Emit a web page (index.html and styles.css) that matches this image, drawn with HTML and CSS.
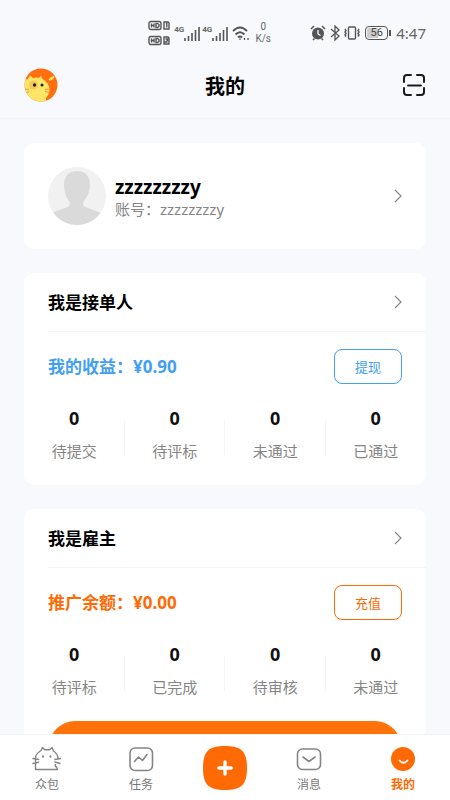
FILE: index.html
```html
<!DOCTYPE html>
<html lang="zh-CN">
<head>
<meta charset="utf-8">
<meta name="viewport" content="width=device-width, initial-scale=1">
<title>我的</title>
<link rel="stylesheet" href="styles.css">
</head>
<body>
<div class="status">
  <svg class="sim" width="24" height="26" viewBox="0 0 24 26" fill="none" stroke="#555" stroke-width="1.400">
    <rect x="1" y="1.500" width="12" height="8" rx="2"/><path d="M3.500 3.500v4M6 3.500v4M3.500 5.500H6M8 3.500v4h1.500l1.500-1v-2l-1.500-1z"/>
    <path d="M16 2h4l1 1v6h-5z M18 4l.8-.5v4"/>
    <rect x="1" y="16.500" width="12" height="8" rx="2"/><path d="M3.500 18.500v4M6 18.500v4M3.500 20.500H6M8 18.500v4h1.500l1.500-1v-2l-1.500-1z"/>
    <path d="M16 17h4l1 1v6h-5z M17.500 19h2v1.500l-2 1.500h2"/>
  </svg>
  <span class="cell"><small>4G</small><svg width="16" height="15" viewBox="0 0 16 15" stroke="#555" stroke-width="1.600"><path d="M1 12v3M4.500 10v5M8 7v8M11.500 4v11M15 1v14"/></svg></span>
  <span class="cell"><small>4G</small><svg width="16" height="15" viewBox="0 0 16 15" stroke="#555" stroke-width="1.600"><path d="M1 12v3M4.500 10v5M8 7v8M11.500 4v11M15 1v14"/></svg></span>
  <svg class="wifi" width="18" height="15" viewBox="0 0 18 15" fill="none" stroke="#555" stroke-width="1.900"><path d="M1 5q7-7 14 0M3.500 8.500q4.500-4.500 9 0M6 11.500q2-2 4 0"/><path d="M8 12.500v1.500M12.500 12v2M16 12v2" stroke-width="1.300"/></svg>
  <span class="speed">0<br>K/s</span>
  <svg class="alarm" width="16" height="16" viewBox="0 0 16 16"><circle cx="8" cy="8.500" r="6" fill="#555"/><path d="M1 4l3-3M15 4l-3-3M3 15l1.500-1.500M13 15l-1.500-1.500" stroke="#555" stroke-width="1.500"/><path d="M8 5v4l2.500 1.500" fill="none" stroke="#fff" stroke-width="1.300"/></svg>
  <svg class="bt" width="12" height="16" viewBox="0 0 12 16" fill="none" stroke="#555" stroke-width="1.300"><path d="M2 4l8 7-4 4V1l4 4-8 7"/></svg>
  <svg class="vib" width="18" height="16" viewBox="0 0 18 16" fill="none" stroke="#555" stroke-width="1.400"><rect x="5.500" y="2" width="7" height="12" rx="1"/><path d="M2 4l1 1.500-1 1.500 1 1.500-1 1.500 1 1.500M16 4l-1 1.500 1 1.500-1 1.500 1 1.500-1 1.500"/></svg>
  <span class="battery">56</span>
  <span class="clock">4:47</span>
</div>

<header class="top">
  <a href="#" aria-label="主页">
    <svg width="34" height="34" viewBox="0 0 34 34">
      <defs><clipPath id="round"><circle cx="17" cy="17" r="16.500"/></clipPath></defs>
      <g clip-path="url(#round)">
        <rect width="34" height="34" fill="#ff6f0f"/>
        <path d="M0 13q1-1 4-2.500l2-3 3 2.500q4-.8 6 0l2-2.500 1.500 3.500q6 3 7 10 0 5-3.500 9L22 34H0z" fill="#fee568"/>
        <path d="M25 12q1-3 5-3.500-1 4-5 3.500z" fill="#fee568" stroke="#fee568"/>
        <circle cx="9.500" cy="17" r="4.500" fill="#fcc653"/>
        <circle cx="10.500" cy="17" r="1.700" fill="#17243b"/><circle cx="18" cy="17" r="1.500" fill="#17243b"/>
        <path d="M1 21l4 .5M2 24.500l3-.8M21 21.500l5-.5M21 23.500l4.500 1" stroke="#ee9440" stroke-width="1" fill="none"/>
      </g>
    </svg>
  </a>
  <h1>我的</h1>
  <button class="scan" type="button" aria-label="扫一扫">
    <svg width="24" height="24" viewBox="0 0 24 24" fill="none" stroke="#1c1c1c" stroke-width="2" stroke-linecap="round"><path d="M2 9V5q0-3 3-3h4M15 2h4q3 0 3 3v4M22 15v4q0 3-3 3h-4M9 22H5q-3 0-3-3v-4M6 12.500h13"/></svg>
  </button>
</header>

<main>
  <a class="card profile" href="#">
    <svg class="avatar" width="58" height="58" viewBox="0 0 58 58"><defs><clipPath id="face"><circle cx="29" cy="29" r="29"/></clipPath></defs><g clip-path="url(#face)"><rect width="58" height="58" fill="#f1f1f1"/><path d="M29 4c9 0 13 6 13 14 0 7-3 12-6 16-2 4 0 6 4 7l13 5v12H4V46l13-5c4-1 6-3 4-7-3-4-5-9-5-16 0-8 4-14 13-14z" fill="#dadada"/></g></svg>
    <span class="who"><strong>zzzzzzzzy</strong><span>账号：zzzzzzzzy</span></span>
    <svg class="chev" width="8" height="14" viewBox="0 0 8 14"><path d="M1 1l6 6-6 6"/></svg>
  </a>

  <section class="card worker">
    <a class="head" href="#"><h2>我是接单人</h2><svg class="chev" width="8" height="14" viewBox="0 0 8 14"><path d="M1 1l6 6-6 6"/></svg></a>
    <div class="money"><strong>我的收益：¥0.90</strong><button type="button">提现</button></div>
    <ul class="stats">
      <li><b>0</b><span>待提交</span></li>
      <li><b>0</b><span>待评标</span></li>
      <li><b>0</b><span>未通过</span></li>
      <li><b>0</b><span>已通过</span></li>
    </ul>
  </section>

  <section class="card employer">
    <a class="head" href="#"><h2>我是雇主</h2><svg class="chev" width="8" height="14" viewBox="0 0 8 14"><path d="M1 1l6 6-6 6"/></svg></a>
    <div class="money"><strong>推广余额：¥0.00</strong><button type="button">充值</button></div>
    <ul class="stats">
      <li><b>0</b><span>待评标</span></li>
      <li><b>0</b><span>已完成</span></li>
      <li><b>0</b><span>待审核</span></li>
      <li><b>0</b><span>未通过</span></li>
    </ul>
    <div class="banner"></div>
  </section>
</main>

<nav class="tabs">
  <a href="#"><svg width="30" height="26" viewBox="0 0 30 26" fill="none" stroke="#858585" stroke-width="1.400" stroke-linecap="round" stroke-linejoin="round"><path d="M3.500 23.500V12q0-4 5.500-7.500l1.500-3 2.500 2.300h4.500l2.500-2.300 1.500 3.500q4.500 3 4.500 8M3.500 23.500h22l-1-2.500q-2-1-1-2.500M1 12.500l5.500 1M1 17.500l5.500-1.200M23 13.500l5.500-1M23 16l5 1.500"/><path d="M11 10.200v.6M18.500 10.200v.6" stroke-width="2"/></svg><span>众包</span></a>
  <a href="#"><svg width="26" height="26" viewBox="0 0 26 26" fill="none" stroke="#858585" stroke-width="1.600" stroke-linecap="round" stroke-linejoin="round"><rect x="2" y="2" width="22.500" height="22.500" rx="5"/><path d="M6.500 15.500l4-4.500 4 3.500 4.500-6"/></svg><span>任务</span></a>
  <button class="add" type="button" aria-label="发布"><svg width="44" height="44" viewBox="0 0 44 44"><path d="M22 0C38 0 44 5 44 22S38 44 22 44 0 39 0 22 6 0 22 0z" fill="#ff6a05"/><path d="M22 16v12M16 22h12" stroke="#fff" stroke-width="3.500" stroke-linecap="round"/></svg></button>
  <a href="#"><svg width="26" height="26" viewBox="0 0 26 26" fill="none" stroke="#858585" stroke-width="1.600" stroke-linecap="round" stroke-linejoin="round"><rect x="1.500" y="3" width="23" height="20.500" rx="5"/><path d="M7 11l6 4.500 6-4.500"/></svg><span>消息</span></a>
  <a class="on" href="#"><svg width="26" height="26" viewBox="0 0 26 26" fill="none"><circle cx="13" cy="13" r="12" fill="#ff6a05"/><path d="M9.500 14.500q4 4.500 8 0" stroke="#fff" stroke-width="1.800" stroke-linecap="round"/></svg><span>我的</span></a>
</nav>
</body>
</html>
```
FILE: styles.css
```css
* {
  box-sizing: border-box;
  margin: 0;
  padding: 0;
}

body {
  display: flex;
  flex-direction: column;
  height: 100vh;
  background: #f8f9fd;
  color: #111;
  font-family: "Noto Sans", "Noto Sans CJK SC", sans-serif;
}

a {
  color: inherit;
  text-decoration: none;
}

button {
  background: none;
  border: 0;
  font: inherit;
  cursor: pointer;
}

svg {
  display: block;
  flex: none;
}

.status {
  display: flex;
  flex: none;
  align-items: center;
  justify-content: flex-end;
  height: 52px;
  padding: 14px 24px 0 0;
  color: #666;
}

.sim {
  margin-right: 2px;
}

.cell {
  display: flex;
  margin-right: 2px;
}

.cell small {
  font: bold 8px/8px "Roboto", sans-serif;
}

.wifi {
  margin: 0 4px 0 2px;
}

.speed {
  width: 18px;
  margin-right: 38px;
  font: 10px/12px "Roboto", sans-serif;
  text-align: center;
}

.bt {
  margin: 0 2px 0 3px;
}

.battery {
  position: relative;
  width: 23px;
  height: 14px;
  margin: 0 8px 0 4px;
  border: 1px solid #555;
  border-radius: 4px;
  background: linear-gradient(90deg, #ccc 60%, transparent 60%) content-box;
  padding: 1px;
  color: #444;
  font: 11px/10px "Roboto", sans-serif;
  text-align: center;
}

.battery::after {
  content: "";
  position: absolute;
  top: 3px;
  right: -4px;
  width: 2px;
  height: 6px;
  background: #555;
}

.clock {
  font-size: 15px;
  line-height: 16px;
}

.top {
  display: grid;
  flex: none;
  grid-template-columns: 1fr auto 1fr;
  align-items: center;
  height: 67px;
  padding: 0 24px;
  border-bottom: 1px solid #f2f3f7;
}

.top h1 {
  padding-top: 4px;
  color: #000;
  font-size: 20px;
  line-height: 28px;
}

.scan {
  justify-self: end;
}

main {
  display: flex;
  flex: 1;
  flex-direction: column;
  gap: 24px;
  min-height: 0;
  padding: 24px;
  overflow-y: auto;
  scrollbar-width: none;
}

.card {
  flex: none;
  background: #fff;
  border-radius: 10px;
}

.chev {
  fill: none;
  stroke: #888;
  stroke-width: 1.2;
}

.profile {
  display: flex;
  align-items: center;
  gap: 9px;
  padding: 24px;
}

.who {
  display: flex;
  flex: 1;
  flex-direction: column;
  padding-top: 3px;
  color: #858585;
  font-size: 15px;
  line-height: 22px;
}

.who strong {
  color: #000;
  font-size: 19px;
}

.head {
  display: flex;
  align-items: center;
  justify-content: space-between;
  height: 59px;
  margin-left: 24px;
  padding-right: 24px;
  border-bottom: 1px solid #f6f6f7;
}

.head h2 {
  padding-top: 2px;
  color: #000;
  font-size: 17px;
  line-height: 24px;
}

.money {
  display: flex;
  align-items: center;
  justify-content: space-between;
  padding: 17px 24px;
  font-size: 17px;
  line-height: 24px;
}

.money button {
  width: 68px;
  height: 35px;
  border: 1px solid;
  border-radius: 8px;
  font-size: 13px;
}

.worker .money,
.worker button {
  color: #439ff0;
}

.employer .money,
.employer button {
  color: #ff6a05;
}

.stats {
  display: grid;
  grid-template-columns: repeat(4, 1fr);
  padding-bottom: 20px;
  list-style: none;
}

.stats li {
  display: flex;
  flex-direction: column;
  gap: 2px;
  align-items: center;
  background: linear-gradient(#f5f5f6, #f5f5f6) right 19px / 1px 35px no-repeat;
}

.stats li:last-child {
  background: none;
}

.stats b {
  font-size: 18px;
  line-height: 34px;
}

.stats span {
  color: #858585;
  font-size: 15px;
  line-height: 28px;
}

.banner {
  height: 52px;
  margin: 0 25px 24px;
  border-radius: 26px;
  background: #ff730a;
}

.tabs {
  display: flex;
  flex: none;
  height: 66px;
  background: #fff;
  border-top: 1px solid #f2f3f7;
}

.tabs a {
  display: flex;
  flex: 94;
  flex-direction: column;
  align-items: center;
  gap: 3px;
  padding-top: 11px;
  color: #777;
  font-size: 12px;
  line-height: 20px;
}

.tabs .on {
  color: #ff6a05;
  font-weight: bold;
}

.add {
  display: flex;
  flex: 74;
  align-items: center;
  justify-content: center;
}
```
